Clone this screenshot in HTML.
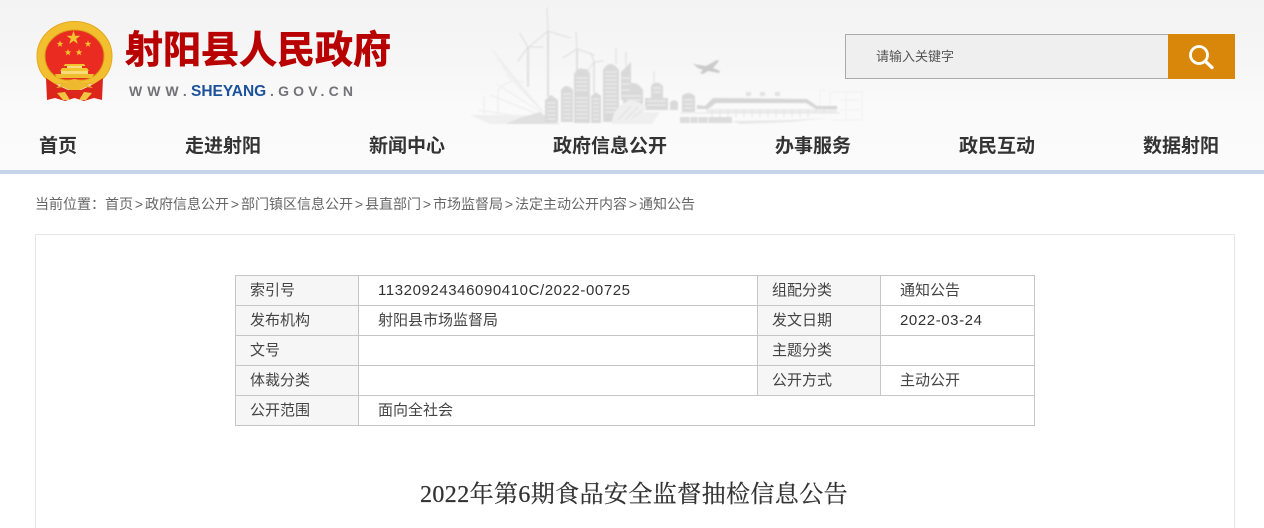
<!DOCTYPE html>
<html lang="zh">
<head>
<meta charset="utf-8">
<title>2022年第6期食品安全监督抽检信息公告</title>
<style>
html,body{margin:0;padding:0;background:#fff;width:1264px;height:528px;overflow:hidden;}
#wrap{position:absolute;left:0;top:0;width:1264px;height:528px;overflow:hidden;font-family:"Liberation Sans","Noto Sans CJK SC",sans-serif;color:#333;}
.abs{position:absolute;white-space:nowrap;}
#hd{position:absolute;left:0;top:0;width:1264px;height:170px;background:linear-gradient(#f3f3f3 0,#f6f6f6 60px,#fafafa 110px,#fbfbfb 170px);}
#bar{position:absolute;left:0;top:170px;width:1264px;height:4px;background:#c6d4e7;}
#title{left:125px;top:20px;font-size:38px;line-height:54px;font-weight:700;color:#b80000;font-family:"Noto Sans CJK SC",sans-serif;-webkit-text-stroke:.7px #b80000;}
.url{top:82px;font-size:14px;line-height:18px;font-weight:700;color:#737376;letter-spacing:5px;}
#sb{position:absolute;left:845px;top:34px;width:322px;height:43px;border:1px solid #aaa;border-right:0;background:#efefef;}
#btn{position:absolute;left:1168px;top:34px;width:67px;height:45px;background:#d9870a;}
#ph{left:876px;top:47px;font-size:13px;line-height:20px;color:#555;}
.nav{top:131px;font-size:19px;line-height:28px;font-weight:700;color:#333;font-family:"Noto Sans CJK SC",sans-serif;}
#crumb{left:35px;top:194px;font-size:14px;line-height:21px;color:#666;}
#crumb i{font-style:normal;display:inline-block;width:12px;text-align:center;}
#box{position:absolute;left:35px;top:234px;width:1198px;height:300px;border:1px solid #e6e6e6;}
table{position:absolute;left:235px;top:275px;width:800px;height:151px;border-collapse:collapse;table-layout:fixed;font-size:15px;color:#444;}
td{border:1px solid #c6c6c6;height:28px;padding:1px 0 0 14px;line-height:28px;white-space:nowrap;}
td.l{background:#f6f6f6;}
td.v{padding-left:19px;}
.num{font-size:15px;letter-spacing:.58px;color:#333;}
#h1{left:420px;top:476px;font-size:24px;line-height:38px;color:#333;letter-spacing:.4px;font-family:"Liberation Serif","Noto Serif CJK SC",serif;font-weight:400;-webkit-text-stroke:.25px #333;}
svg{position:absolute;left:0;top:0;overflow:visible;}
</style>
</head>
<body>
<div id="wrap">
<div id="hd"></div>
<div id="bar"></div>

<svg width="1264" height="170" viewBox="0 0 1264 170" fill="#d9d9d9" stroke="none">
  <g style="filter:blur(.7px)">
    <!-- fan lines -->
    <g stroke="#ededed" stroke-width="1" fill="none">
      <path d="M543 112 492 50M543 112 497 58M543 112 502 66M543 112 506 74M542 113 497 84M540 115 490 95M530 118 478 110"/>
      <path d="M484 118V96M498 118V90Q510 78 524 82"/>
    </g>
    <path d="M470 115H530L548 120 558 124H490Z" fill="#efefef"/>
    <path d="M520 118 540 112 548 118 560 124H505Z" fill="#e0e0e0"/>
    <!-- turbines -->
    <g stroke="#dfdfdf" fill="none" stroke-linecap="round">
      <path d="M548 31V96" stroke-width="2"/>
      <path d="M548 31 547 8M548 31 570 38M548 31 530 46" stroke-width="1.1"/>
      <path d="M577 49V70" stroke-width="2"/>
      <path d="M577 49 576 32M577 49 594 55M577 49 563 58" stroke-width="1.1"/>
      <path d="M528 47V86" stroke-width="2"/>
      <path d="M528 47 520 34M528 47 543 47M528 47 518 61" stroke-width="1.1"/>
      <path d="M594 62V92" stroke-width="1.6"/>
      <path d="M594 62 591 53M594 62 603 61M594 62 588 70" stroke-width="1"/>
      <path d="M616 48V64M626 52V66M654 72V82" stroke-width="1"/>
    </g>
    <!-- buildings -->
    <path d="M545 122V100L551 95 558 100V122Z"/>
    <path d="M561 122V90Q566 82 573 90V122Z"/>
    <path d="M574 123V74Q578 67 583 69Q588 68 590 74V123Z"/>
    <path d="M591 123V96L596 92 601 96V123Z"/>
    <path d="M603 122V70Q610 58 619 70V122Z"/>
    <path d="M621 100V72L631 62V100Z"/>
    <path d="M623 110V88Q632 79 640 86L643 90V110Z"/>
    <path d="M651 100V86Q656 79 663 86V100Z"/>
    <path d="M645 110V98H668V110Z"/>
    <path d="M670 110V102L674 100 678 102V110Z"/>
    <path d="M682 112V96Q688 90 695 96V112Z"/>
    <!-- window lines -->
    <g stroke="#f1f1f1" stroke-width="1" fill="none">
      <path d="M547 103H556M547 107H556M547 111H556M547 115H556M547 119H556"/>
      <path d="M563 94H571M563 98H571M563 102H571M563 106H571M563 110H571M563 114H571M563 118H571"/>
      <path d="M576 78H588M576 82H588M576 86H588M576 90H588M576 98H588M576 102H588M576 106H588M576 110H588M576 114H588M576 118H588"/>
      <path d="M593 99H599M593 103H599M593 107H599M593 111H599M593 115H599M593 119H599"/>
      <path d="M605 72H617M605 76H617M605 80H617M605 84H617M605 88H617M605 92H617M605 96H617M605 100H617M605 104H617M605 108H617M605 112H617"/>
      <path d="M622 78H630M622 84H630M622 90H630M622 96H630"/>
      <path d="M627 96H641M627 100H641"/>
      <path d="M653 88H661M653 92H661M647 101H666M647 105H666"/>
      <path d="M684 100H693M684 104H693M684 108H693"/>
    </g>
    <!-- shell shape -->
    <path d="M612 124Q612 108 628 101Q638 99 647 108L641 112 660 112 652 124Z" fill="#efefef"/>
    <path d="M618 120 631 106M625 120 638 107M632 118 643 110" stroke="#e0e0e0" fill="none"/>
    <!-- station -->
    <path d="M697 105 705 106 713 98 807 99 817 106 837 106V109H816L806 103H716L708 109H697Z" fill="#d6d6d6"/>
    <path d="M706 109H837V113H706Z" fill="#ececec"/>
    <path d="M712 109V117M720 109V117M728 109V117M736 109V117M744 109V117M752 109V117M760 109V117M768 109V117M776 109V117M784 109V117M792 109V117M800 109V117M808 109V117M816 109V113M824 109V113" stroke="#e4e4e4" fill="none"/>
    <path d="M680 113H840" stroke="#e6e6e6" fill="none"/>
    <path d="M680 117H732V123H680Z" fill="#dcdcdc"/>
    <path d="M690 117V123M698 117V123M708 117V123" stroke="#f2f2f2" fill="none"/>
    <path d="M732 121 790 120 828 118 790 122 740 124Z" fill="#e8e8e8"/>
    <path d="M746 92H751V96H746ZM760 92H765V96H760ZM775 92H780V96H775Z" fill="#e2e2e2"/>
    <path d="M820 106V90H826M830 106V92H862V120H830" fill="none" stroke="#f1f1f1"/>
    <path d="M840 100H860M840 110H860M846 92V120" stroke="#f3f3f3" fill="none"/>
    <!-- plane -->
    <path d="M693 64 706 66 717 60 719 61 713 68 720 71 719 73 708 71 703 74 700 73 703 70 698 68Z" fill="#cbcbcb"/>
  </g>
</svg>

<!-- emblem -->
<svg width="1264" height="170" viewBox="0 0 1264 170">
  <defs>
    <path id="st" d="M0-1 .235-.31.95-.31.37.12.59.81 0 .38-.59.81-.37.12-.95-.31-.235-.31Z"/>
  </defs>
  <g style="filter:blur(.35px)">
    <!-- gold ring -->
    <path d="M37 56A37.500 34.500 0 0 1 112 56C112 70 105 80 94 84L55 84C44 80 37 70 37 56Z" fill="#f2bf2e" stroke="#e4a820" stroke-width="1"/>
    <path d="M45 56A29.500 26 0 0 1 104 56C104 68 96 78 84 80H65C53 78 45 68 45 56Z" fill="#ea2b22" stroke="#d99a16" stroke-width="1"/>
    <!-- ribbon -->
    <path d="M46 78 55 84 68 90 81 90 94 84 103 78 102 100 94 98 84 101 74.500 98 65 101 55 98 47 100Z" fill="#dc261c"/>
    <g fill="#f4c42f">
      <use href="#st" transform="translate(73.500 38) scale(7.2)"/>
      <use href="#st" transform="translate(60 44) scale(3.6)"/>
      <use href="#st" transform="translate(88 44) scale(3.6)"/>
      <use href="#st" transform="translate(68 52.500) scale(3.6)"/>
      <use href="#st" transform="translate(79 52.500) scale(3.6)"/>
      <!-- gate -->
      <path d="M65 64H84L85.500 66H63.500Z"/>
      <path d="M67 66H82V68H67Z" fill="#f7dc82"/>
      <path d="M62 68H87L89 71H60Z"/>
      <path d="M61 71H88V74H61Z" fill="#f8dc7a"/>
      <path d="M55 74H94L92 78H57Z" fill="#f1bd30"/>
    </g>
    <path d="M56 88Q62 83 66 84 69 79 74.500 79 80 79 83 84 87 83 93 88L86 87 80 90H69L63 87Z" fill="#efb92f"/>
    <path d="M57 93 65 92 70 100 63 100ZM92 93 84 92 79 100 86 100Z" fill="#f2c540"/>
    <path d="M68 91H81L79 93H70Z" fill="#dd2a20"/>
  </g>
</svg>

<div class="abs" id="title">射阳县人民政府</div>
<div class="abs url" style="left:129px;">WWW.</div>
<div class="abs url" style="left:191px;top:83px;font-size:15.5px;color:#1c519c;letter-spacing:0;">SHEYANG</div>
<div class="abs url" style="left:270px;letter-spacing:4.2px;">.GOV.CN</div>

<div id="sb"></div>
<div id="btn"></div>
<svg width="1264" height="170" viewBox="0 0 1264 170" fill="none" stroke="#fff" stroke-width="2.800" stroke-linecap="round">
  <circle cx="1199" cy="55" r="8.500"/>
  <path d="M1205.500 61.500 1212 67.500" stroke-width="3.300"/>
</svg>
<div class="abs" id="ph">请输入关键字</div>

<div class="abs nav" style="left:39px;">首页</div>
<div class="abs nav" style="left:185px;">走进射阳</div>
<div class="abs nav" style="left:369px;">新闻中心</div>
<div class="abs nav" style="left:553px;">政府信息公开</div>
<div class="abs nav" style="left:775px;">办事服务</div>
<div class="abs nav" style="left:959px;">政民互动</div>
<div class="abs nav" style="left:1143px;">数据射阳</div>

<div class="abs" id="crumb">当前位置：首页<i>&gt;</i>政府信息公开<i>&gt;</i>部门镇区信息公开<i>&gt;</i>县直部门<i>&gt;</i>市场监督局<i>&gt;</i>法定主动公开内容<i>&gt;</i>通知公告</div>

<div id="box"></div>

<table style="width:799px;">
  <colgroup><col style="width:123px"><col style="width:399px"><col style="width:123px"><col style="width:154px"></colgroup>
  <tr><td class="l">索引号</td><td class="v num">11320924346090410C/2022-00725</td><td class="l">组配分类</td><td class="v">通知公告</td></tr>
  <tr><td class="l">发布机构</td><td class="v">射阳县市场监督局</td><td class="l">发文日期</td><td class="v num">2022-03-24</td></tr>
  <tr><td class="l">文号</td><td class="v"></td><td class="l">主题分类</td><td class="v"></td></tr>
  <tr><td class="l">体裁分类</td><td class="v"></td><td class="l">公开方式</td><td class="v">主动公开</td></tr>
  <tr><td class="l">公开范围</td><td class="v" colspan="3">面向全社会</td></tr>
</table>

<div class="abs" id="h1">2022年第6期食品安全监督抽检信息公告</div>
</div>
</body>
</html>
